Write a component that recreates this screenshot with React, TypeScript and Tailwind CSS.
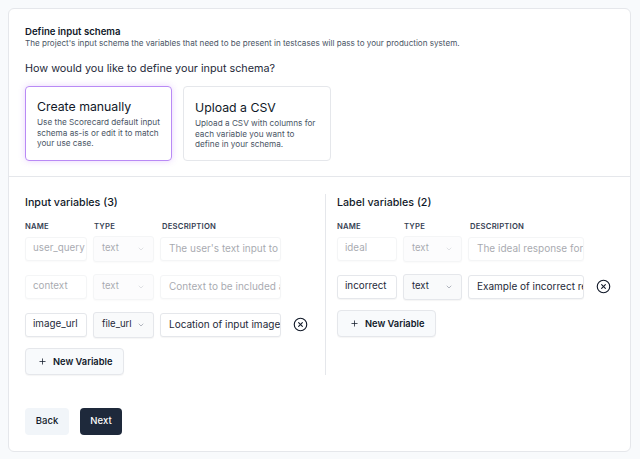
import { ChevronDown, CircleX, Plus } from "lucide-react";

type Variable = {
  name: string;
  type: string;
  description: string;
  locked?: boolean;
};

const inputVars: Variable[] = [
  { name: "user_query", type: "text", description: "The user's text input to the model", locked: true },
  { name: "context", type: "text", description: "Context to be included as part of the prompt", locked: true },
  { name: "image_url", type: "file_url", description: "Location of input image" },
];

const labelVars: Variable[] = [
  { name: "ideal", type: "text", description: "The ideal response for the input", locked: true },
  { name: "incorrect", type: "text", description: "Example of incorrect response" },
];

function VariableRow({ v, widths }: { v: Variable; widths: string[] }) {
  return (
    <div className={`flex items-center gap-[6px] h-[25px] ${v.locked ? "opacity-40" : ""}`}>
      <div className={`${widths[0]} h-[24px] shrink-0 rounded-[3px] border border-gray-200 bg-white shadow-[0_1px_1px_rgba(0,0,0,0.04)] px-[7px] flex items-center overflow-hidden`}>
        <span className="text-[9.8px] text-gray-800 whitespace-nowrap">{v.name}</span>
      </div>
      <div className={`${widths[1]} h-[26px] shrink-0 rounded-[3px] border border-gray-200 bg-gray-50 shadow-[0_1px_1px_rgba(0,0,0,0.04)] pl-[8px] pr-[8px] flex items-center justify-between`}>
        <span className="text-[9.5px] text-gray-800">{v.type}</span>
        <ChevronDown className="w-[8px] h-[8px] text-gray-500" strokeWidth={1.5} />
      </div>
      <div className={`${widths[2]} h-[24px] shrink-0 rounded-[3px] border border-gray-200 bg-white shadow-[0_1px_1px_rgba(0,0,0,0.04)] px-[8px] flex items-center overflow-hidden`}>
        <span className="text-[10px] text-gray-800 whitespace-nowrap">{v.description}</span>
      </div>
      {!v.locked && (
        <CircleX className="ml-[6px] w-[15px] h-[15px] text-gray-900 shrink-0" strokeWidth={1.8} />
      )}
    </div>
  );
}

function VariableSection({ title, vars, widths }: { title: string; vars: Variable[]; widths: string[] }) {
  return (
    <div>
      <h3 className="text-[10.7px] leading-[18px] font-medium text-gray-900">{title}</h3>
      <div className="mt-[10px] flex gap-[6px] text-[7.7px] leading-[10px] font-semibold text-gray-700 tracking-wide">
        <span className={widths[0]}>NAME</span>
        <span className={`${widths[1]} pl-[1px]`}>TYPE</span>
        <span className={`${widths[2]} pl-[2px]`}>DESCRIPTION</span>
      </div>
      <div className="mt-[4px] flex flex-col gap-[13px]">
        {vars.map((v) => (
          <VariableRow key={v.name} v={v} widths={widths} />
        ))}
      </div>
      <button className="mt-[11px] h-[27px] pl-[12px] pr-[11px] flex items-center gap-[6px] rounded-[4px] border border-gray-200 bg-slate-50 shadow-[0_1px_1px_rgba(0,0,0,0.04)]">
        <Plus className="w-[9px] h-[9px] text-gray-900" strokeWidth={2} />
        <span className="text-[9.3px] font-semibold text-gray-900">New Variable</span>
      </button>
    </div>
  );
}

export default function App() {
  return (
    <div className="min-h-screen bg-[#f8fafc] p-[8px] font-['Inter',sans-serif]">
      <div className="w-[623px] h-[444px] bg-white border border-gray-200 rounded-[6px]">
        <div className="px-[16px] pt-[16px]">
          <h2 className="text-[9.6px] leading-[13px] font-semibold text-gray-900">Define input schema</h2>
          <p className="text-[8.1px] leading-[11px] text-gray-600">
            The project's input schema the variables that need to be present in testcases will pass to your production system.
          </p>
          <p className="mt-[12px] text-[10.8px] leading-[15px] text-gray-800">How would you like to define your input schema?</p>
          <div className="mt-[10px] flex gap-[11px]">
            <div className="w-[147px] h-[75px] rounded-[4px] border-[1.5px] border-[#b98af5] shadow-[0_0_6px_rgba(168,85,247,0.25)] pl-[11px] pt-[12px]">
              <p className="text-[12.3px] leading-[16px] text-gray-900">Create manually</p>
              <p className="mt-[2px] w-[124.5px] text-[8.2px] leading-[10.5px] text-gray-600">
                Use the Scorecard default input schema as-is or edit it to match your use case.
              </p>
            </div>
            <div className="w-[148px] h-[75px] rounded-[4px] border border-gray-200 pl-[11px] pt-[13px]">
              <p className="text-[12.3px] leading-[16px] text-gray-900">Upload a CSV</p>
              <p className="mt-[2px] w-[124.5px] text-[8.2px] leading-[10.5px] text-gray-600">
                Upload a CSV with columns for each variable you want to define in your schema.
              </p>
            </div>
          </div>
        </div>
        <div className="mt-[15px] border-t border-gray-200 pt-[17px] flex">
          <div className="w-[317px] border-r border-gray-200 pl-[16px]">
            <VariableSection title="Input variables (3)" vars={inputVars} widths={["w-[62px]", "w-[61px]", "w-[121px]"]} />
          </div>
          <div className="pl-[11px]">
            <VariableSection title="Label variables (2)" vars={labelVars} widths={["w-[60px]", "w-[59px]", "w-[116px]"]} />
          </div>
        </div>
        <div className="mt-[33px] pl-[16px] flex gap-[11px]">
          <button className="h-[27px] w-[44px] rounded-[4px] bg-slate-100 text-[9.5px] font-medium text-gray-900">Back</button>
          <button className="h-[27px] w-[42px] rounded-[4px] bg-[#1e293b] text-[9.5px] font-medium text-white">Next</button>
        </div>
      </div>
    </div>
  );
}
